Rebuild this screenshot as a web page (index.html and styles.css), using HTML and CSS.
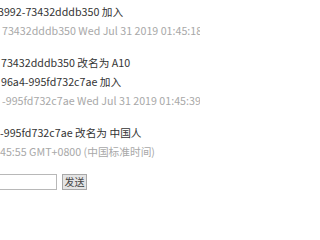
FILE: index.html
```html
<!DOCTYPE html>
<html>
<head>
<meta charset="utf-8">
<link rel="stylesheet" href="styles.css">
</head>
<body>
<div class="chat">
  <div class="msg">
    <div class="line text l1">3992-73432dddb350 加入</div>
    <div class="line time l2">73432dddb350 Wed Jul 31 2019 01:45:18 GMT+0800 (中国标准时间)</div>
  </div>
  <div class="msg">
    <div class="line text l3">73432dddb350 改名为 A10</div>
    <div class="line text l4">96a4-995fd732c7ae 加入</div>
    <div class="line time l5">-995fd732c7ae Wed Jul 31 2019 01:45:39 GMT+0800 (中国标准时间)</div>
  </div>
  <div class="msg">
    <div class="line text l6">-995fd732c7ae 改名为 中国人</div>
    <div class="line time l7">45:55 GMT+0800 (中国标准时间)</div>
  </div>
  <form class="send" onsubmit="return false">
    <input class="input" type="text">
    <button class="btn" type="button">发送</button>
  </form>
</div>
</body>
</html>
```
FILE: styles.css
```css
html, body {
  margin: 0;
  padding: 0;
  background: #fff;
  overflow: hidden;
}
body {
  font-family: "Noto Sans CJK SC", "Noto Sans", sans-serif;
  font-size: 10.7px;
  width: 200px;
  height: 200px;
}
.chat {
  padding-top: 2px;
}
.msg {
  margin-bottom: 13px;
}
.line {
  line-height: 19px;
  white-space: nowrap;
}
.text { color: #333; }
.time { color: #a8a8a8; }
.l1 { text-indent: -2px; }
.l2 { text-indent: 2px; }
.l3 { text-indent: 1px; }
.l4 { text-indent: 1px; }
.l5 { text-indent: 2px; }
.l6 { text-indent: 0; }
.l7 { text-indent: 0; }
.send {
  display: flex;
  align-items: center;
  gap: 5px;
  margin: 5px 0 0 -20px;
}
.input {
  width: 77px;
  height: 16px;
  box-sizing: border-box;
  border: 1px solid #b8b8b8;
  padding: 0 2px;
  margin: 0;
  font-size: 11px;
}
.btn {
  height: 16px;
  width: 25px;
  box-sizing: border-box;
  border: 1px solid #a8a8a8;
  background: #e4e4e4;
  color: #444;
  font-family: "Noto Sans CJK SC", sans-serif;
  font-size: 10px;
  line-height: 12px;
  padding: 0;
  margin: 0;
  border-radius: 0;
}
```
